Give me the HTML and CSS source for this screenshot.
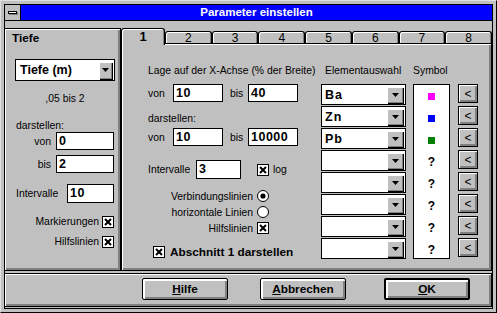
FILE: index.html
```html
<!DOCTYPE html>
<html lang="de">
<head>
  <meta charset="UTF-8">
  <meta name="viewport" content="width=device-width, initial-scale=1.0">
  <title>Parameter einstellen</title>
  <link rel="stylesheet" href="styles.css">
</head>
<body>
  <div class="window">
    <div class="frame">

      <!-- Title bar -->
      <div class="titlebar">
        <div class="sysmenu"><span></span></div>
        <div class="title">Parameter einstellen</div>
      </div>

      <div class="client">
        <div class="main">

          <!-- Left panel: Tiefe -->
          <div class="depth">
            <div class="depth-title">Tiefe</div>
            <div class="combo combo-depth">
              <span class="combo-text">Tiefe (m)</span>
              <span class="drop"><svg width="7" height="4"><polygon points="0,0 7,0 3.5,4" fill="#000"/></svg></span>
            </div>
            <div class="range">,05 bis 2</div>
            <div class="depth-show">darstellen:</div>
            <div class="drow"><span class="dlabel">von</span><div class="field dfield">0</div></div>
            <div class="drow drow-bis"><span class="dlabel">bis</span><div class="field dfield">2</div></div>
            <div class="irow"><span class="ilabel">Intervalle</span><div class="field ifield">10</div></div>
            <div class="crow crow-first">Markierungen
              <svg class="chk" width="12" height="12"><rect x=".5" y=".5" width="11" height="11" fill="#fff" stroke="#000"/><path d="M3 3l6 6M9 3l-6 6" stroke="#000" stroke-width="2"/></svg>
            </div>
            <div class="crow">Hilfslinien
              <svg class="chk" width="12" height="12"><rect x=".5" y=".5" width="11" height="11" fill="#fff" stroke="#000"/><path d="M3 3l6 6M9 3l-6 6" stroke="#000" stroke-width="2"/></svg>
            </div>
          </div>

          <!-- Right: tab control -->
          <div class="tabctl">
            <div class="tabs">
              <div class="tab active">1</div>
              <div class="tab">2</div>
              <div class="tab">3</div>
              <div class="tab">4</div>
              <div class="tab">5</div>
              <div class="tab">6</div>
              <div class="tab">7</div>
              <div class="tab">8</div>
            </div>
            <div class="page">

              <div class="col-a">
                <div class="hdr">Lage auf der X-Achse (% der Breite)</div>
                <div class="xrow">
                  <span>von</span><div class="field">10</div>
                  <span class="bis">bis</span><div class="field">40</div>
                </div>
                <div class="sub">darstellen:</div>
                <div class="xrow xrow-2">
                  <span>von</span><div class="field">10</div>
                  <span class="bis">bis</span><div class="field">10000</div>
                </div>
                <div class="ivrow">
                  <span class="ivlabel">Intervalle</span><div class="field ivfield">3</div>
                  <svg class="chk chk-log" width="12" height="12"><rect x=".5" y=".5" width="11" height="11" fill="#fff" stroke="#000"/><path d="M3 3l6 6M9 3l-6 6" stroke="#000" stroke-width="2"/></svg>
                  <span>log</span>
                </div>
                <div class="opts">
                  <div class="opt">Verbindungslinien
                    <svg width="12" height="12"><circle cx="6" cy="6" r="5.5" fill="#fff" stroke="#000"/><circle cx="6" cy="6" r="2.6" fill="#000"/></svg>
                  </div>
                  <div class="opt">horizontale Linien
                    <svg width="12" height="12"><circle cx="6" cy="6" r="5.5" fill="#fff" stroke="#000"/></svg>
                  </div>
                  <div class="opt">Hilfslinien
                    <svg width="12" height="12"><rect x=".5" y=".5" width="11" height="11" fill="#fff" stroke="#000"/><path d="M3 3l6 6M9 3l-6 6" stroke="#000" stroke-width="2"/></svg>
                  </div>
                </div>
                <div class="show-row">
                  <svg width="12" height="12"><rect x=".5" y=".5" width="11" height="11" fill="#fff" stroke="#000"/><path d="M3 3l6 6M9 3l-6 6" stroke="#000" stroke-width="2"/></svg>
                  <span>Abschnitt 1 darstellen</span>
                </div>
              </div>

              <div class="col-b">
                <div class="elements">
                  <div class="hdr hdr-el">Elementauswahl</div>
                  <div class="combo"><span class="combo-text">Ba</span><span class="drop"><svg width="7" height="4"><polygon points="0,0 7,0 3.5,4" fill="#000"/></svg></span></div>
                  <div class="combo"><span class="combo-text">Zn</span><span class="drop"><svg width="7" height="4"><polygon points="0,0 7,0 3.5,4" fill="#000"/></svg></span></div>
                  <div class="combo"><span class="combo-text">Pb</span><span class="drop"><svg width="7" height="4"><polygon points="0,0 7,0 3.5,4" fill="#000"/></svg></span></div>
                  <div class="combo"><span class="combo-text"></span><span class="drop"><svg width="7" height="4"><polygon points="0,0 7,0 3.5,4" fill="#000"/></svg></span></div>
                  <div class="combo"><span class="combo-text"></span><span class="drop"><svg width="7" height="4"><polygon points="0,0 7,0 3.5,4" fill="#000"/></svg></span></div>
                  <div class="combo"><span class="combo-text"></span><span class="drop"><svg width="7" height="4"><polygon points="0,0 7,0 3.5,4" fill="#000"/></svg></span></div>
                  <div class="combo"><span class="combo-text"></span><span class="drop"><svg width="7" height="4"><polygon points="0,0 7,0 3.5,4" fill="#000"/></svg></span></div>
                  <div class="combo"><span class="combo-text"></span><span class="drop"><svg width="7" height="4"><polygon points="0,0 7,0 3.5,4" fill="#000"/></svg></span></div>
                </div>
                <div class="symbols">
                  <div class="hdr">Symbol</div>
                  <div class="symbox">
                    <div class="sym"><i class="swatch magenta"></i></div>
                    <div class="sym"><i class="swatch blue"></i></div>
                    <div class="sym"><i class="swatch green"></i></div>
                    <div class="sym">?</div>
                    <div class="sym">?</div>
                    <div class="sym">?</div>
                    <div class="sym">?</div>
                    <div class="sym">?</div>
                  </div>
                </div>
                <div class="pickers">
                  <div class="pick">&lt;</div>
                  <div class="pick">&lt;</div>
                  <div class="pick">&lt;</div>
                  <div class="pick">&lt;</div>
                  <div class="pick">&lt;</div>
                  <div class="pick">&lt;</div>
                  <div class="pick">&lt;</div>
                  <div class="pick">&lt;</div>
                </div>
              </div>

            </div>
          </div>
        </div>

        <!-- Button bar -->
        <div class="bottom">
          <div class="btn"><span><u>H</u>ilfe</span></div>
          <div class="btn btn-cancel"><span><u>A</u>bbrechen</span></div>
          <div class="btn btn-ok"><span><u>O</u>K</span></div>
        </div>
      </div>

    </div>
  </div>
</body>
</html>
```

FILE: styles.css
```css
/* Window frame */
body {
  margin: 0;
  font-family: "Liberation Sans", Arial, sans-serif;
  font-size: 10.4px;
  color: #000;
  background: #c0c0c0;
}

.window {
  width: 497px;
  height: 313px;
  box-sizing: border-box;
  background: #c0c0c0;
  border: 1px solid;
  border-color: #dfdfdf #000 #000 #dfdfdf;
  padding: 3px;
}

.frame {
  height: 100%;
  box-sizing: border-box;
  border: 1px solid #000;
  display: flex;
  flex-direction: column;
}

.titlebar {
  height: 15px;
  border-bottom: 1px solid #000;
  display: flex;
}

.sysmenu {
  width: 15px;
  border-right: 1px solid #000;
  display: flex;
  align-items: center;
  justify-content: center;
}

.sysmenu span {
  width: 7px;
  height: 1px;
  border: 1px solid #000;
  background: #fff;
  box-shadow: 1px 1px #808080;
}

.title {
  flex: 1;
  background: #0000ff;
  color: #fff;
  font-weight: bold;
  font-size: 11.5px;
  line-height: 15px;
  text-align: center;
}

.client {
  flex: 1;
  padding-top: 7px;
  display: flex;
  flex-direction: column;
}

.main {
  display: flex;
  height: 243px;
}

/* Shared 3D look */
.depth, .page, .bottom {
  box-sizing: border-box;
  border: 1px solid #000;
  box-shadow: inset 1px 1px #fff, inset -2px -2px #808080;
}

.field {
  box-sizing: border-box;
  height: 18px;
  border: 1px solid #000;
  background: #fff;
  font-weight: bold;
  font-size: 12.5px;
  letter-spacing: 0.5px;
  line-height: 16px;
  padding-left: 2px;
}

.combo {
  box-sizing: border-box;
  height: 21px;
  margin-bottom: 1px;
  border: 1px solid #000;
  background: #fff;
  display: flex;
  align-items: center;
}

.combo-text {
  flex: 1;
  padding-left: 3px;
  font-weight: bold;
  font-size: 12.5px;
  letter-spacing: 1px;
}

.drop {
  width: 16px;
  height: 16px;
  margin-right: 2px;
  box-sizing: border-box;
  background: #c0c0c0;
  box-shadow: inset 1px 1px #fff, inset -1px -1px #808080, 1px 1px #000;
  display: flex;
  align-items: center;
  justify-content: center;
}

svg {
  display: block;
  flex: none;
}

/* Left panel */
.depth {
  width: 116px;
  border-left: none;
}

.depth-title {
  margin-top: 1px;
  padding-left: 7px;
  height: 16px;
  line-height: 16px;
  font-weight: bold;
  font-size: 11.8px;
}

.combo-depth {
  width: 100px;
  height: 22px;
  margin: 13px 0 0 10px;
}

.combo-depth .combo-text {
  letter-spacing: 0;
  padding-left: 4px;
}

.combo-depth .drop {
  width: 13px;
  height: 17px;
}

.range {
  margin: 11px 0 0 10px;
  width: 100px;
  height: 13px;
  line-height: 13px;
  text-align: center;
}

.depth-show {
  margin: 14px 0 0 11px;
  height: 13px;
  line-height: 13px;
}

.drow {
  display: flex;
  align-items: center;
  padding-left: 11px;
}

.drow-bis {
  margin-top: 5px;
}

.dlabel {
  width: 35px;
  padding-right: 5px;
  text-align: right;
}

.dfield {
  width: 58px;
}

.irow {
  display: flex;
  align-items: center;
  margin-top: 11px;
  padding-left: 11px;
}

.ilabel {
  width: 51px;
}

.ifield {
  width: 47px;
  height: 19px;
}

.crow {
  width: 93px;
  height: 13px;
  margin: 7px 0 0 16px;
  display: flex;
  align-items: center;
  justify-content: flex-end;
  gap: 3px;
}

.crow-first {
  margin-top: 12px;
}

/* Tabs */
.tabctl {
  width: 371px;
  display: flex;
  flex-direction: column;
}

.tabs {
  height: 15px;
  display: flex;
  align-items: flex-end;
}

.tab {
  flex: 1;
  height: 12px;
  box-sizing: border-box;
  border: 1px solid #000;
  border-bottom: none;
  border-radius: 3px 3px 0 0;
  box-shadow: inset 1px 1px #fff, inset -1px 0 #808080;
  text-align: center;
  font-size: 12px;
  line-height: 13px;
}

.tab.active {
  flex: none;
  width: 44px;
  height: 17px;
  margin-bottom: -2px;
  position: relative;
  z-index: 1;
  background: #c0c0c0;
  font-weight: bold;
  font-size: 13px;
  line-height: 16px;
}

.page {
  flex: 1;
  display: flex;
  padding: 20px 0 0 26px;
}

.hdr {
  height: 13px;
  line-height: 13px;
  margin-bottom: 7px;
  white-space: nowrap;
}

.col-a {
  width: 173px;
}

.xrow {
  display: grid;
  grid-template-columns: 25px 50px 25px 50px;
  align-items: center;
}

.xrow .bis {
  padding-left: 7px;
}

.sub {
  margin-top: 10px;
  height: 13px;
  line-height: 13px;
}

.xrow-2 {
  margin-top: 3px;
}

.ivrow {
  margin-top: 14px;
  display: flex;
  align-items: center;
}

.ivlabel {
  width: 48px;
}

.ivfield {
  width: 45px;
  height: 19px;
}

.chk-log {
  margin: 0 4px 0 16px;
}

.opts {
  margin-top: 9px;
  width: 121px;
}

.opt {
  height: 16px;
  display: flex;
  align-items: center;
  justify-content: flex-end;
  gap: 4px;
  white-space: nowrap;
}

.show-row {
  margin-top: 9px;
  padding-left: 5px;
  height: 14px;
  display: flex;
  align-items: center;
  gap: 5px;
  font-weight: bold;
  font-size: 11.8px;
}

/* Element selection */
.col-b {
  display: flex;
}

.elements {
  width: 85px;
}

.hdr-el {
  padding-left: 4px;
}

.symbols {
  width: 37px;
  margin-left: 7px;
}

.symbox {
  box-sizing: border-box;
  height: 175px;
  border: 1px solid #000;
  background: #fff;
}

.sym {
  height: 22px;
  display: flex;
  align-items: center;
  justify-content: center;
  font-weight: bold;
  font-size: 12px;
}

.swatch {
  width: 7px;
  height: 7px;
}

.magenta { background: #ff00ff; }
.blue { background: #0000ff; }
.green { background: #008000; }

.pickers {
  width: 20px;
  margin-left: 8px;
  padding-top: 20px;
}

.pick {
  box-sizing: border-box;
  height: 19px;
  margin-bottom: 3px;
  border: 1px solid #000;
  box-shadow: inset 1px 1px #fff, inset -2px -2px #808080;
  display: flex;
  align-items: center;
  justify-content: center;
  font-size: 12px;
}

/* Button bar */
.bottom {
  margin-top: 2px;
  height: 34px;
  border-left: none;
  display: flex;
  padding: 4px 0 0 137px;
}

.btn {
  width: 86px;
  height: 22px;
  box-sizing: border-box;
  border: 1px solid #000;
  border-radius: 2px;
  box-shadow: inset 2px 2px #fff, inset -2px -2px #808080;
  display: flex;
  align-items: center;
  justify-content: center;
  font-weight: bold;
  font-size: 11.8px;
}

.btn-cancel {
  margin-left: 32px;
}

.btn-ok {
  margin-left: 38px;
  border-width: 2px;
}
```
